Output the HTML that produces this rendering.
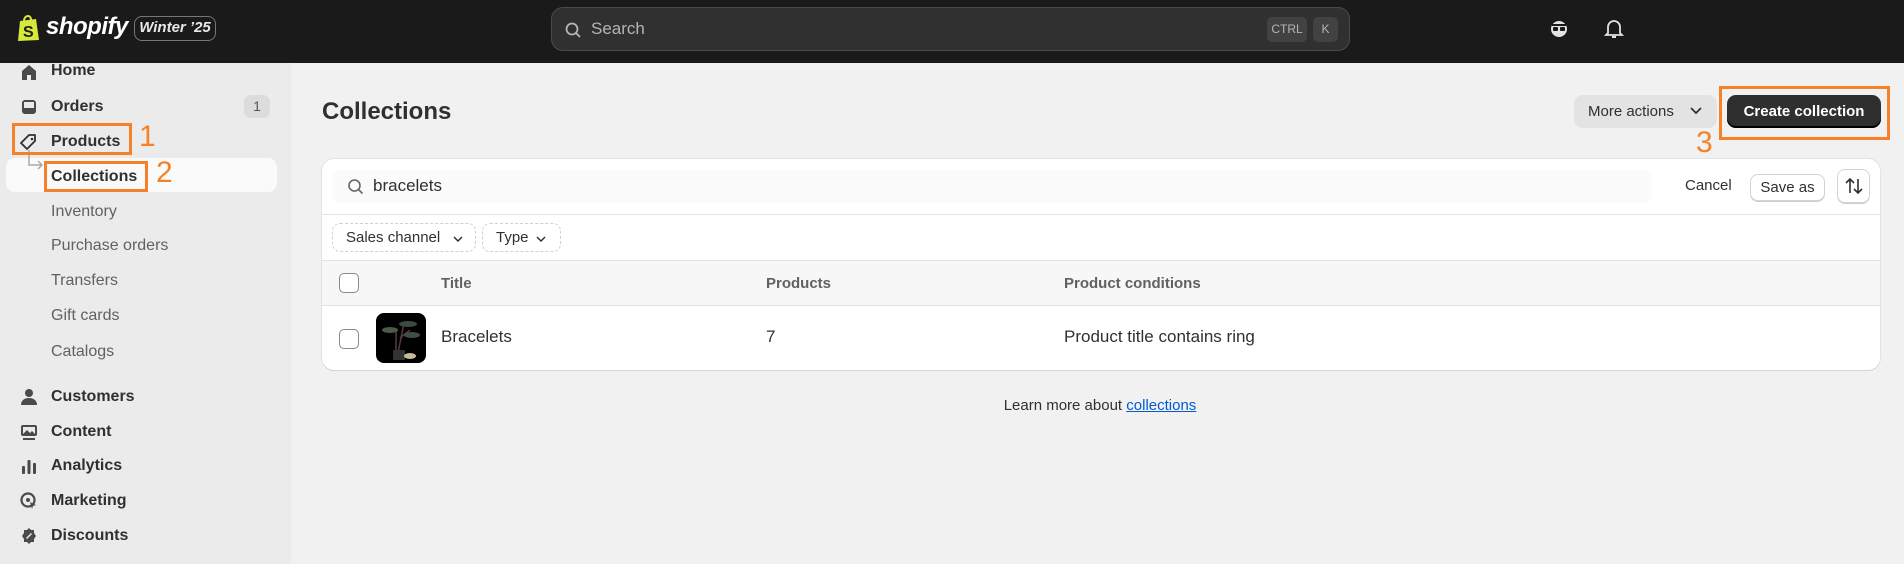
<!DOCTYPE html>
<html><head><meta charset="utf-8"><style>
*{box-sizing:border-box;margin:0;padding:0}
body{width:1904px;height:564px;overflow:hidden;background:#f1f1f1;font-family:"Liberation Sans",Arial,sans-serif;color:#303030;position:relative}
.top{position:absolute;left:0;top:0;width:1904px;height:63px;background:#1a1a1a}
.side{position:absolute;left:0;top:63px;width:291px;height:501px;background:#ebebeb}
.abs{position:absolute}
.nav{position:absolute;left:51px;font-size:16px;font-weight:bold;color:#303030;line-height:20px}
.sub{font-weight:normal;color:#616161}
.ico{position:absolute;left:20px;width:18px;height:18px}
.ob{position:absolute;border:3px solid #f5822a}
.on{position:absolute;color:#f5822a;font-size:30px;line-height:30px}
.card{position:absolute;left:322px;top:159px;width:1558px;height:211px;background:#fff;border-radius:12px;box-shadow:0 1px 0 #d4d4d4,0 0 0 1px #e3e3e3;overflow:hidden}
.cb{position:absolute;width:20px;height:20px;border:1.5px solid #8a8a8a;border-radius:5px;background:#fff}
.t15{font-size:16px}
</style></head><body>
<div class="top">
  <svg class="abs" style="left:17px;top:14px" width="24" height="28" viewBox="0 0 24 28"><path d="M3 7 L19 5 L22 26 L1 27 Z" fill="#d6e83a"/><path d="M7 7 C7 1 14 0 14 6" stroke="#d6e83a" stroke-width="2" fill="none"/><text x="6" y="23" font-size="16" font-weight="bold" fill="#1a1a1a" font-family="Liberation Sans">S</text></svg>
  <div class="abs" style="left:46px;top:13px;color:#fff;font-size:24px;font-weight:bold;font-style:italic;letter-spacing:-0.5px">shopify</div>
  <div class="abs" style="left:134px;top:16px;width:82px;height:25px;border:1px solid #777;border-radius:8px;color:#e8e8e8;font-size:15px;font-style:italic;font-weight:bold;text-align:center;line-height:22px">Winter ’25</div>
  <div class="abs" style="left:551px;top:7px;width:799px;height:44px;background:#303030;border:1px solid #4a4a4a;border-radius:12px">
    <svg class="abs" style="left:12px;top:13px" width="18" height="18" viewBox="0 0 18 18"><circle cx="8" cy="8" r="5.5" stroke="#b5b5b5" stroke-width="1.8" fill="none"/><path d="M12 12l4 4" stroke="#b5b5b5" stroke-width="1.8"/></svg>
    <div class="abs" style="left:39px;top:11px;color:#b5b5b5;font-size:17px">Search</div>
    <div class="abs" style="left:715px;top:9px;width:40px;height:25px;background:#424242;border-radius:5px;color:#b5b5b5;font-size:12px;text-align:center;line-height:25px">CTRL</div>
    <div class="abs" style="left:761px;top:9px;width:25px;height:25px;background:#424242;border-radius:5px;color:#b5b5b5;font-size:12px;text-align:center;line-height:25px">K</div>
  </div>
  <svg class="abs" style="left:1549px;top:19px" width="20" height="20" viewBox="0 0 20 20"><circle cx="10" cy="10" r="8" fill="#e3e3e3"/><rect x="4" y="8" width="5" height="4" rx="1" fill="#1a1a1a"/><rect x="11" y="8" width="5" height="4" rx="1" fill="#1a1a1a"/><path d="M3 6h14" stroke="#1a1a1a" stroke-width="2"/></svg>
  <svg class="abs" style="left:1604px;top:18px" width="20" height="22" viewBox="0 0 20 22"><path d="M4 15V9a6 6 0 0112 0v6l2 2H2z" stroke="#e3e3e3" stroke-width="1.8" fill="none"/><path d="M8 19h4" stroke="#e3e3e3" stroke-width="2"/></svg>
</div>
<div class="side">
  <div class="abs" style="left:6px;top:95px;width:271px;height:34px;background:#fafafa;border-radius:9px"></div>
</div>
<svg class="ico" style="top:63px" viewBox="0 0 18 18"><path d="M2 8L9 2l7 6v9h-5v-5H7v5H2z" fill="#4a4a4a"/></svg>
<div class="nav" style="top:61px">Home</div>
<svg class="ico" style="top:98px" viewBox="0 0 18 18"><rect x="2" y="2" width="14" height="14" rx="3" fill="#4a4a4a"/><rect x="4" y="4" width="10" height="6" fill="#ebebeb"/></svg>
<div class="nav" style="top:97px">Orders</div>
<div class="abs" style="left:244px;top:95px;width:26px;height:23px;background:#dcdcdc;border-radius:7px;font-size:14px;color:#555;text-align:center;line-height:23px">1</div>
<svg class="ico" style="top:133px" viewBox="0 0 18 18"><path d="M9 2h6v6l-8 8-6-6z" stroke="#303030" stroke-width="1.8" fill="none" stroke-linejoin="round"/><circle cx="12" cy="6" r="1.3" fill="#303030"/></svg>
<div class="nav" style="top:132px">Products</div>
<svg class="abs" style="left:26px;top:150px" width="20" height="22"><path d="M3 0v15h13m-4-4l4 4-4 4" stroke="#aaa" stroke-width="1.5" fill="none"/></svg>
<div class="nav" style="top:167px">Collections</div>
<div class="nav sub" style="top:202px">Inventory</div>
<div class="nav sub" style="top:236px">Purchase orders</div>
<div class="nav sub" style="top:271px">Transfers</div>
<div class="nav sub" style="top:306px">Gift cards</div>
<div class="nav sub" style="top:342px">Catalogs</div>
<svg class="ico" style="top:388px" viewBox="0 0 18 18"><circle cx="9" cy="5" r="4" fill="#4a4a4a"/><path d="M1 17c0-5 4-7 8-7s8 2 8 7z" fill="#4a4a4a"/></svg>
<div class="nav" style="top:387px">Customers</div>
<svg class="ico" style="top:423px" viewBox="0 0 18 18"><rect x="1" y="2" width="16" height="11" rx="2" fill="#4a4a4a"/><rect x="3" y="4" width="12" height="7" fill="#ebebeb"/><path d="M3 11l4-4 3 3 2-2 3 3z" fill="#4a4a4a"/><path d="M3 16h12" stroke="#4a4a4a" stroke-width="2"/></svg>
<div class="nav" style="top:422px">Content</div>
<svg class="ico" style="top:457px" viewBox="0 0 18 18"><rect x="2" y="9" width="3" height="8" rx="1" fill="#4a4a4a"/><rect x="7.5" y="3" width="3" height="14" rx="1" fill="#4a4a4a"/><rect x="13" y="6" width="3" height="11" rx="1" fill="#4a4a4a"/></svg>
<div class="nav" style="top:456px">Analytics</div>
<svg class="ico" style="top:492px" viewBox="0 0 18 18"><circle cx="8" cy="8" r="6.5" stroke="#4a4a4a" stroke-width="2.2" fill="none"/><circle cx="8" cy="8" r="2" fill="#4a4a4a"/><path d="M10 10l6 3-3 1-1 3z" fill="#4a4a4a"/></svg>
<div class="nav" style="top:491px">Marketing</div>
<svg class="ico" style="top:527px" viewBox="0 0 18 18"><path d="M9 1l2 2h3v3l2 3-2 3v3h-3l-2 2-2-2H4v-3L2 9l2-3V3h3z" fill="#4a4a4a"/><path d="M6.5 11.5l5-5" stroke="#ebebeb" stroke-width="1.5"/></svg>
<div class="nav" style="top:526px">Discounts</div>
<div class="ob" style="left:12px;top:123px;width:120px;height:32px"></div>
<div class="on" style="left:139px;top:122px">1</div>
<div class="ob" style="left:44px;top:161px;width:104px;height:31px"></div>
<div class="on" style="left:156px;top:158px">2</div>

<div class="abs" style="left:322px;top:98px;font-size:24px;font-weight:bold;color:#303030">Collections</div>
<div class="abs" style="left:1574px;top:95px;width:143px;height:33px;background:#e3e3e3;border-radius:9px;font-size:15px;color:#303030;line-height:33px;padding-left:14px">More actions</div>
<svg class="abs" style="left:1690px;top:106px" width="12" height="10"><path d="M1 2l5 5 5-5" stroke="#303030" stroke-width="1.7" fill="none"/></svg>
<div class="abs" style="left:1727px;top:95px;width:154px;height:33px;background:#2f2f2f;border-radius:9px;font-size:15px;font-weight:bold;color:#fff;text-align:center;line-height:33px;box-shadow:inset 0 -2px 0 #000">Create collection</div>
<div class="ob" style="left:1719px;top:86px;width:171px;height:54px"></div>
<div class="on" style="left:1696px;top:128px">3</div>

<div class="card">
  <div class="abs" style="left:10px;top:10px;width:1320px;height:34px;background:#fbfbfb;border-radius:8px"></div>
  <svg class="abs" style="left:24px;top:18px" width="20" height="20" viewBox="0 0 20 20"><circle cx="8.5" cy="8.5" r="5.5" stroke="#666" stroke-width="1.6" fill="none"/><path d="M12.5 12.5l4 4" stroke="#666" stroke-width="1.6"/></svg>
  <div class="abs t15" style="left:51px;top:17px;font-size:17px;color:#303030">bracelets</div>
  <div class="abs t15" style="left:1363px;top:18px;font-size:15px">Cancel</div>
  <div class="abs" style="left:1428px;top:15px;width:75px;height:27px;border:1px solid #d4d4d4;border-radius:8px;font-size:15px;text-align:center;line-height:25px;box-shadow:0 1px 0 #ccc">Save as</div>
  <div class="abs" style="left:1515px;top:10px;width:33px;height:34px;border:1px solid #d4d4d4;border-radius:8px;box-shadow:0 1px 0 #ccc"></div>
  <svg class="abs" style="left:1522px;top:18px" width="20" height="18"><path d="M6 16V2M2 6l4-4 4 4M14 2v14M10 12l4 4 4-4" stroke="#303030" stroke-width="1.6" fill="none"/></svg>
  <div class="abs" style="left:0;top:55px;width:1558px;height:1px;background:#e3e3e3"></div>
  <div class="abs" style="left:10px;top:64px;width:144px;height:29px;border:1px dashed #d0d0d0;border-radius:8px;font-size:15px;line-height:27px;padding-left:13px">Sales channel</div>
  <svg class="abs" style="left:130px;top:76px" width="12" height="8"><path d="M2 2l4 4 4-4" stroke="#303030" stroke-width="1.5" fill="none"/></svg>
  <div class="abs" style="left:160px;top:64px;width:79px;height:29px;border:1px dashed #d0d0d0;border-radius:8px;font-size:15px;line-height:27px;padding-left:13px">Type</div>
  <svg class="abs" style="left:213px;top:76px" width="12" height="8"><path d="M2 2l4 4 4-4" stroke="#303030" stroke-width="1.5" fill="none"/></svg>
  <div class="abs" style="left:0;top:101px;width:1558px;height:46px;background:#f7f7f7;border-top:1px solid #e3e3e3;border-bottom:1px solid #e3e3e3"></div>
  <div class="cb" style="left:17px;top:114px"></div>
  <div class="abs" style="left:119px;top:116px;font-size:15px;font-weight:bold;color:#616161">Title</div>
  <div class="abs" style="left:444px;top:116px;font-size:15px;font-weight:bold;color:#616161">Products</div>
  <div class="abs" style="left:742px;top:116px;font-size:15px;font-weight:bold;color:#616161">Product conditions</div>
  <div class="cb" style="left:17px;top:170px"></div>
  <div class="abs" style="left:54px;top:154px;width:50px;height:50px;background:#000;border-radius:8px;overflow:hidden">
    <svg width="50" height="50"><path d="M20 40V15M22 40L28 10M24 25l10-8" stroke="#5a3a3a" stroke-width="1.5"/><ellipse cx="14" cy="17" rx="8" ry="3" fill="#4a5a4a"/><ellipse cx="32" cy="11" rx="9" ry="3" fill="#3a4a42"/><ellipse cx="36" cy="22" rx="8" ry="3" fill="#3f4f45"/><rect x="17" y="37" width="12" height="10" fill="#333"/><ellipse cx="34" cy="43" rx="6" ry="3" fill="#c8b99a"/></svg>
  </div>
  <div class="abs" style="left:119px;top:168px;font-size:17px">Bracelets</div>
  <div class="abs" style="left:444px;top:168px;font-size:17px">7</div>
  <div class="abs" style="left:742px;top:168px;font-size:17px">Product title contains ring</div>
</div>
<div class="abs" style="left:0;width:2200px;top:397px;text-align:center;font-size:15px;color:#303030">Learn more about <span style="color:#005bd3;text-decoration:underline">collections</span></div>
</body></html>
